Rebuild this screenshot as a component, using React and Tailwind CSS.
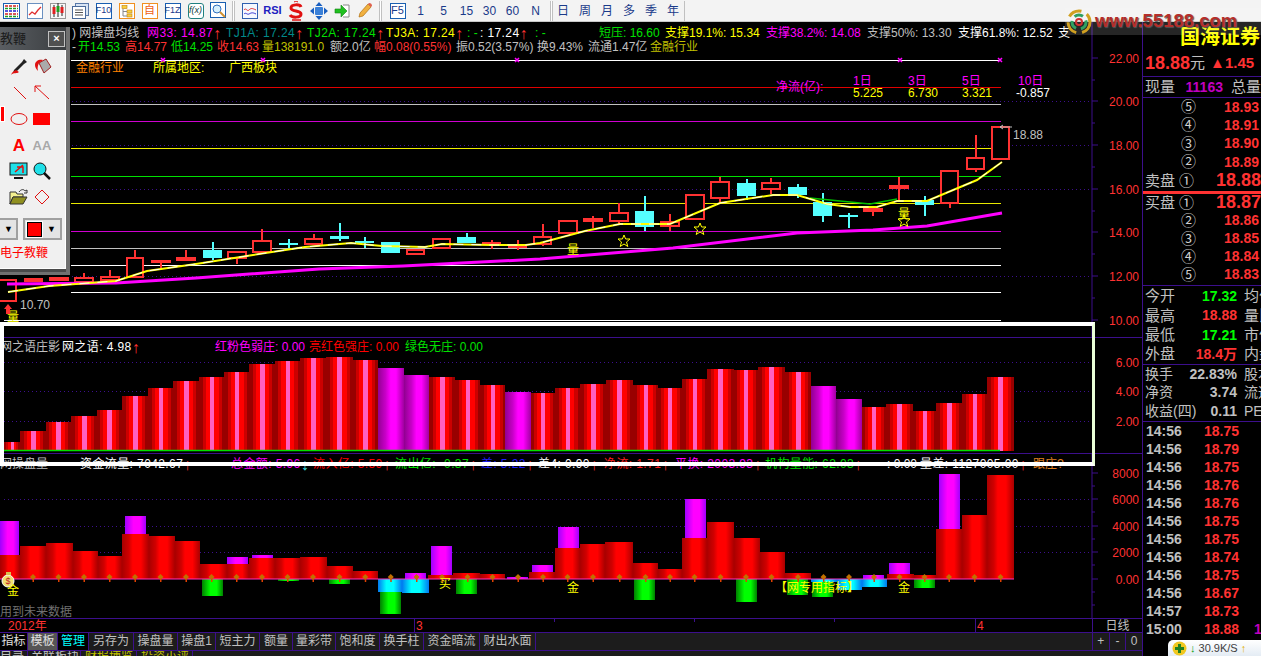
import React from "react";

const PURPLE = "#3c0f8c";
const RED = "#ff3232";

// hollow / filled / cyan candles: [x0, x1, top, bottom, wickTop, wickBottom, type]
const candles = [
  [-4, 17, 279, 302, 279, 302, "h"], [24, 43, 278, 282, 278, 282, "h"], [49, 69, 277, 281, 277, 281, "h"],
  [74, 94, 277, 283, 273, 283, "h"], [100, 120, 276, 281, 270, 281, "h"], [126, 144, 257, 278, 250, 278, "h"],
  [151, 171, 260, 263, 260, 268, "f"], [176, 196, 257, 261, 250, 261, "f"], [203, 222, 250, 258, 242, 260, "c"],
  [227, 247, 251, 259, 251, 264, "h"], [252, 272, 240, 253, 229, 253, "h"], [279, 298, 243, 245, 239, 248, "c"],
  [304, 323, 238, 245, 234, 245, "h"], [330, 349, 236, 239, 223, 241, "c"], [355, 374, 241, 243, 237, 248, "c"],
  [381, 400, 242, 253, 242, 253, "c"], [406, 425, 249, 255, 249, 255, "h"], [432, 451, 238, 249, 238, 249, "h"],
  [457, 476, 237, 243, 233, 243, "c"], [482, 501, 242, 243, 240, 249, "f"], [508, 527, 246, 248, 240, 250, "f"],
  [533, 552, 236, 245, 224, 246, "h"], [558, 578, 220, 234, 220, 234, "h"], [583, 603, 218, 222, 216, 228, "f"],
  [609, 629, 212, 222, 203, 224, "h"], [635, 654, 211, 227, 196, 231, "c"], [660, 680, 221, 227, 214, 231, "h"],
  [685, 705, 194, 220, 194, 220, "h"], [710, 730, 181, 199, 177, 202, "h"], [737, 756, 183, 196, 179, 200, "c"],
  [761, 781, 182, 190, 178, 194, "h"], [788, 807, 187, 195, 184, 198, "c"], [813, 832, 202, 216, 193, 222, "c"],
  [839, 858, 215, 217, 213, 228, "c"], [863, 883, 208, 212, 208, 216, "f"], [889, 909, 185, 189, 177, 200, "h"],
  [915, 934, 200, 205, 196, 216, "c"], [940, 959, 170, 204, 170, 208, "h"], [966, 985, 157, 170, 135, 172, "h"],
  [991, 1010, 126, 160, 126, 160, "h"],
];

const yellowLine = "8,292 49,286 116,281 147,271 196,264 253,255 305,247 351,243 382,246 425,247 442,244 491,245 526,245 540,243 585,231 620,224 670,224 720,203 773,195 797,195 827,204 850,207 877,207 897,201 927,201 977,180 1002,162";
const magentaLine = "7,284 116,283 196,278 319,269 403,266 540,259 673,248 797,233 873,230 927,226 1002,213";

const levels = [
  [87, "#e00000"], [104, "#c0c0c0"], [121, "#d000d0"], [148, "#f0f000"], [176, "#00e000"],
  [203, "#e8e800"], [231, "#d000d0"], [248, "#c0c0c0"], [265, "#ffffff"], [292, "#ffffff"], [320, "#ffffff"],
];

// middle panel: [x0, x1, top, isPurple]
const midBars = [
  [4, 20, 442], [20, 46, 431], [46, 71, 422], [71, 97, 416], [97, 122, 410], [122, 148, 396], [148, 173, 388],
  [173, 199, 381], [199, 224, 377], [224, 249, 372], [249, 275, 364], [275, 300, 361], [300, 326, 358],
  [326, 353, 357], [353, 377.5, 360], [377.5, 404, 368, 1], [404, 429, 375, 1], [429, 455, 377], [455, 480, 380],
  [480, 505, 385], [505, 531, 392, 1], [531, 555, 393], [555, 580, 388], [580, 606, 384], [606, 633, 380],
  [633, 658, 385], [658, 682, 388], [682, 707, 379], [707, 734, 369], [734, 758, 370], [758, 785, 367],
  [785, 811, 372], [811, 836, 386, 1], [836, 862, 399, 1], [862, 886, 407], [886, 913, 404], [913, 936, 411],
  [936, 962, 403], [962, 987, 394], [987, 1014, 377],
];

// lower panel rows: [x0, x1, kind, top, bottom]
const lowBars = [
  [0, 20, "r", 555, 579], [0, 19, "m", 521, 555], [20, 46, "r", 546, 579], [46, 73, "r", 543, 579], [73, 98, "r", 551, 579],
  [98, 122, "r", 556, 579], [122, 149, "r", 534, 579], [125, 146, "m", 516, 534], [149, 175, "r", 536, 579],
  [175, 200, "r", 541, 579], [200, 227, "r", 564, 579], [202, 223, "g", 579, 596], [227, 249, "r", 564, 579],
  [227, 248, "m", 557, 564], [249, 275, "r", 558, 579], [252, 273, "m", 555, 558], [275, 300, "r", 558, 579],
  [278, 299, "g", 579, 581], [300, 327, "r", 557, 579], [327, 353, "r", 566, 579], [329, 350, "g", 579, 584],
  [353, 378, "r", 571, 579], [378, 402, "b", 579, 592], [380, 401, "g", 592, 614], [402, 429, "b", 579, 593],
  [405, 426, "m", 573, 579], [428, 453, "r", 575, 579], [431, 452, "m", 546, 575], [453, 480, "r", 573, 579],
  [456, 477, "g", 579, 594], [480, 505, "r", 574, 579], [507, 528, "m", 577, 579], [529, 555, "r", 572, 579],
  [532, 553, "m", 565, 572], [555, 580, "r", 548, 579], [558, 579, "m", 527, 548], [580, 605, "r", 544, 579],
  [605, 633, "r", 542, 579], [633, 658, "r", 563, 579], [634, 655, "g", 579, 600], [658, 682, "r", 569, 579],
  [682, 707, "r", 538, 579], [685, 706, "m", 499, 538], [707, 734, "r", 522, 579], [734, 760, "r", 538, 579],
  [736, 757, "g", 579, 602], [760, 785, "r", 552, 579], [785, 811, "r", 573, 579], [787, 808, "g", 579, 595],
  [811, 837, "b", 579, 582], [812, 833, "g", 582, 597], [837, 862, "b", 579, 590], [862, 887, "b", 579, 587],
  [863, 884, "m", 575, 579], [887, 914, "r", 574, 579], [889, 910, "m", 563, 574], [914, 936, "r", 575, 579],
  [914, 935, "g", 579, 588], [936, 962, "r", 529, 579], [939, 960, "m", 474, 529], [962, 987, "r", 515, 579],
  [987, 1014, "r", 475, 579],
];

const fills = { r: "url(#lowRed)", m: "url(#lowPurple)", g: "url(#lowGreen)", b: "url(#lowBlue)" };

const legendTop = [
  [72, 32, "#c0c0c0", ") 网操盘均线"],
  [147, 32, "#ff00ff", "网33: 14.87", 1],
  [226, 32, "#008a8a", "TJ1A: 17.24", 1],
  [307, 32, "#00e000", "TJ2A: 17.24", 1],
  [386, 32, "#ffff00", "TJ3A: 17.24", 1],
  [467, 32, "#00e000", ": -"],
  [480, 32, "#ffffff", ": 17.24", 1],
  [535, 32, "#00e000", ": -"],
  [599, 32, "#00e000", "短压: 16.60"],
  [665, 32, "#ffff00", "支撑19.1%: 15.34"],
  [766, 32, "#ff00ff", "支撑38.2%: 14.08"],
  [867, 32, "#c0c0c0", "支撑50%: 13.30"],
  [958, 32, "#ffffff", "支撑61.8%: 12.52"],
  [1058, 32, "#ffffff", "支"],
  [72, 46, "#c0c0c0", "-"],
  [78, 46, "#00e000", "开14.53"],
  [125, 46, RED, "高14.77"],
  [171, 46, "#00e000", "低14.25"],
  [217, 46, RED, "收14.63"],
  [262, 46, "#c0c000", "量138191.0"],
  [330, 46, "#c0c0c0", "额2.0亿"],
  [374, 46, RED, "幅0.08(0.55%)"],
  [456, 46, "#c0c0c0", "振0.52(3.57%)"],
  [537, 46, "#c0c0c0", "换9.43%"],
  [588, 46, "#c0c0c0", "流通1.47亿"],
  [650, 46, "#c0c000", "金融行业"],
  [76, 67, "#ff8000", "金融行业"],
  [153, 67, "#ffff00", "所属地区:"],
  [229, 67, "#ffff00", "广西板块"],
  [776, 86, "#ff00ff", "净流(亿):"],
  [853, 80, "#ff00ff", "1日"],
  [908, 80, "#ff00ff", "3日"],
  [962, 80, "#ff00ff", "5日"],
  [1018, 80, "#ff00ff", "10日"],
  [853, 92, "#ffff00", "5.225"],
  [908, 92, "#ffff00", "6.730"],
  [962, 92, "#ffff00", "3.321"],
  [1016, 92, "#ffffff", "-0.857"],
];

const legendMid = [
  [0, 346, "#c0c0c0", "网之语庄影"],
  [62, 346, "#ffffff", "网之语: 4.98", 1],
  [215, 346, "#ff00ff", "红粉色弱庄: 0.00"],
  [309, 346, "#ff0000", "亮红色强庄: 0.00"],
  [405, 346, "#00e000", "绿色无庄: 0.00"],
];

const legendLow = [
  [0, 463, "#c0c0c0", "网操盘量"],
  [80, 463, "#ffffff", "资金流量: 7042.67", 1],
  [231, 463, "#ff00ff", "总金额: 5.96", 2],
  [313, 463, "#ff0000", "流入亿: 5.59", 1],
  [395, 463, "#00e000", "流出亿: -0.37", 1],
  [481, 463, "#2020ff", "差: 5.22", 1],
  [538, 463, "#ffffff", "差4: 0.90", 1],
  [604, 463, "#ff2020", "净流: 1.71", 1],
  [675, 463, "#ff00ff", "平换: 2003.93", 1],
  [765, 463, "#00e000", "机构量能: 62.03", 1],
  [887, 463, "#ffffff", ": 0.00"],
  [920, 463, "#ffffff", "量差: 1127005.00", 1],
  [1033, 463, "#e08020", "跟庄?"],
];

const Legend = ({ items }) =>
  items.map(([x, y, fill, text, arrow], i) => (
    <text key={i} x={x} y={y + 1} fill={fill} fontSize="12" letterSpacing={arrow ? "0.4" : "0"} dominantBaseline="central">
      {text}
      {arrow === 1 ? <tspan fill={RED} fontSize="16">↑</tspan> : null}
      {arrow === 2 ? <tspan fill="#40e0e0" fontSize="16">↓</tspan> : null}
    </text>
  ));

const AxisLabels = ({ items }) =>
  items.map(([label, y]) => (
    <text key={label} x="1139" y={y + 1} fill={RED} fontSize="12" textAnchor="end" dominantBaseline="central">
      {label}
    </text>
  ));

const Dotted = ({ y, x1 = 4, x2 = 1092 }) => (
  <line x1={x1} x2={x2} y1={y} y2={y} stroke={PURPLE} strokeDasharray="1 3" shapeRendering="crispEdges" />
);

const Star = ({ x, y }) => (
  <polygon
    transform={`translate(${x} ${y})`}
    points="0,-6 1.6,-2 6,-2 2.5,1 3.8,5.5 0,3 -3.8,5.5 -2.5,1 -6,-2 -1.6,-2"
    fill="none"
    stroke="#ffff00"
  />
);

const Cross = ({ x }) => (
  <path d={`M${x - 2} 58l4 4M${x + 2} 58l-4 4`} stroke="#ff00ff" strokeWidth="1.5" />
);

function MainPanel() {
  const majors = [58, 101, 145, 189, 232, 276, 320];
  const minors = [80, 123, 167, 211, 254, 298];
  return (
    <section className="h-[315px]">
      <svg className="block h-full w-full" viewBox="0 22 1142 315">
        {[145, 189, 276].map((y) => <Dotted key={y} y={y} x1={72} />)}
        <Dotted y={101} x1={72} />
        <line x1="71" x2="1001" y1="60" y2="60" stroke="#fff" shapeRendering="crispEdges" />
        {[163, 263, 517, 900, 1000].map((x) => <Cross key={x} x={x} />)}
        {levels.map(([y, c]) => (
          <line key={y} x1={y === 320 ? 4 : 71} x2="1001" y1={y} y2={y} stroke={c} shapeRendering="crispEdges" />
        ))}
        {candles.map(([x0, x1, top, bot, wt, wb, type], i) => {
          const color = type === "c" ? "#55ffff" : "#ff3232";
          const mid = (x0 + x1) / 2;
          return (
            <g key={i} shapeRendering="crispEdges">
              <line x1={mid} x2={mid} y1={wt} y2={wb} stroke={color} strokeWidth="2" />
              {type === "h" ? (
                <rect x={x0 + 1} y={top + 1} width={x1 - x0 - 2} height={bot - top - 2} fill="#000" stroke={color} strokeWidth="2" />
              ) : (
                <rect x={x0} y={top} width={x1 - x0} height={Math.max(bot - top, 2)} fill={color} />
              )}
            </g>
          );
        })}
        <polyline points={magentaLine} fill="none" stroke="#ff00ff" strokeWidth="3" />
        <polyline points="810,198 840,201 870,204 897,199" fill="none" stroke="#00c000" strokeWidth="1.5" />
        <polyline points={yellowLine} fill="none" stroke="#ffff00" strokeWidth="2" />
        <polyline points={yellowLine} fill="none" stroke="#ffffff" strokeWidth="1" strokeDasharray="10 8" />
        <Star x={624} y={241} />
        <Star x={700} y={229} />
        <Star x={904} y={221} />
        <Legend
          items={[
            [567, 249, "#ffff00", "量"],
            [898, 213, "#ffff00", "量"],
            [7, 316, "#ffff00", "量"],
            [20, 304, "#c0c0c0", "10.70"],
            [1013, 134, "#c0c0c0", "18.88"],
            ...legendTop,
          ]}
        />
        <path d="M1000 127l3-2m-3 2l3 2m-3-2h12" stroke="#c0c0c0" fill="none" />
        <path d="M4 309l4-5 4 5h-2v5h-4v-5z" fill="#ff3232" />
        <line x1="1092" x2="1092" y1="22" y2="337" stroke={PURPLE} />
        {majors.map((y) => <line key={y} x1="1092" x2="1098" y1={y} y2={y} stroke={PURPLE} />)}
        {minors.map((y) => <line key={y} x1="1092" x2="1095" y1={y} y2={y} stroke={PURPLE} />)}
        <AxisLabels
          items={[["22.00", 58], ["20.00", 101], ["18.00", 145], ["16.00", 189], ["14.00", 232], ["12.00", 276], ["10.00", 320]]}
        />
      </svg>
    </section>
  );
}

function MidPanel() {
  return (
    <section className="h-[117px]">
      <svg className="block h-full w-full" viewBox="0 337 1142 117">
        <defs>
          <linearGradient id="midRed">
            <stop offset="0" stopColor="#990000" /><stop offset="0.14" stopColor="#990000" />
            <stop offset="0.14" stopColor="#cc0000" /><stop offset="0.26" stopColor="#cc0000" />
            <stop offset="0.26" stopColor="#ff0000" /><stop offset="0.42" stopColor="#ff0000" />
            <stop offset="0.42" stopColor="#ff60c0" /><stop offset="0.6" stopColor="#ff60c0" />
            <stop offset="0.6" stopColor="#ff0000" /><stop offset="0.78" stopColor="#ff0000" />
            <stop offset="0.78" stopColor="#cc0000" /><stop offset="0.9" stopColor="#cc0000" />
            <stop offset="0.9" stopColor="#990000" /><stop offset="1" stopColor="#990000" />
          </linearGradient>
          <linearGradient id="midPurple">
            <stop offset="0" stopColor="#900090" /><stop offset="0.3" stopColor="#c800c8" />
            <stop offset="0.5" stopColor="#ff00ff" /><stop offset="0.7" stopColor="#ff00ff" />
            <stop offset="1" stopColor="#a000a0" />
          </linearGradient>
        </defs>
        <line x1="0" x2="1142" y1="337" y2="337" stroke={PURPLE} strokeWidth="2" />
        {[362, 391, 421].map((y) => <Dotted key={y} y={y} />)}
        {midBars.map(([x0, x1, top, purple], i) => (
          <rect key={i} x={x0} y={top} width={x1 - x0} height={451 - top} fill={purple ? "url(#midPurple)" : "url(#midRed)"} shapeRendering="crispEdges" />
        ))}
        <line x1="4" x2="1000" y1="450.5" y2="450.5" stroke="#00e000" strokeWidth="1.5" />
        <line x1="0" x2="1142" y1="453.5" y2="453.5" stroke={PURPLE} />
        <Legend items={legendMid} />
        <AxisLabels items={[["6.00", 362], ["4.00", 391], ["2.00", 421]]} />
      </svg>
    </section>
  );
}

function LowPanel() {
  const majors = [473, 499, 526, 552, 579];
  const minors = [486, 512, 539, 565, 592, 605];
  const dots = [];
  for (let i = 0; i < 40; i++) dots.push(midBars[i][0] / 2 + midBars[i][1] / 2);
  return (
    <section className="h-[164px]">
      <svg className="block h-full w-full" viewBox="0 454 1142 164">
        <defs>
          <linearGradient id="lowRed">
            <stop offset="0" stopColor="#a80000" /><stop offset="0.25" stopColor="#d00000" />
            <stop offset="0.4" stopColor="#ff0000" /><stop offset="0.7" stopColor="#ff0000" />
            <stop offset="1" stopColor="#a80000" />
          </linearGradient>
          <linearGradient id="lowPurple">
            <stop offset="0" stopColor="#a000ff" /><stop offset="0.4" stopColor="#ff00ff" />
            <stop offset="0.7" stopColor="#ff00ff" /><stop offset="1" stopColor="#a000ff" />
          </linearGradient>
          <linearGradient id="lowGreen">
            <stop offset="0" stopColor="#008000" /><stop offset="0.4" stopColor="#00ff00" />
            <stop offset="0.7" stopColor="#00ff00" /><stop offset="1" stopColor="#008000" />
          </linearGradient>
          <linearGradient id="lowBlue">
            <stop offset="0" stopColor="#0078f0" /><stop offset="0.35" stopColor="#00ffff" />
            <stop offset="0.65" stopColor="#00ffff" /><stop offset="1" stopColor="#0078f0" />
          </linearGradient>
        </defs>
        {[499, 526, 552].map((y) => <Dotted key={y} y={y} />)}
        <Legend items={legendLow} />
        {lowBars.map(([x0, x1, kind, top, bot], i) => (
          <rect key={i} x={x0} y={top} width={x1 - x0} height={bot - top} fill={fills[kind]} shapeRendering="crispEdges" />
        ))}
        <line x1="0" x2="1014" y1="579" y2="579" stroke="#ff30c0" />
        {dots.slice(1).map((x) => (
          <g key={x}>
            <polygon points={`${x - 3},577 ${x},574 ${x + 3},577 ${x},580`} fill="#c07000" />
            <rect x={x - 0.5} y="579" width="1.5" height="3" fill="#e04000" />
          </g>
        ))}
        <circle cx="8" cy="581" r="6" fill="#f0e070" stroke="#fff" />
        <rect x="6" y="572" width="5" height="3" fill="#d8c050" />
        <text x="8" y="581" fill="#c02020" fontSize="9" textAnchor="middle" dominantBaseline="central">$</text>
        <Legend
          items={[
            [7, 590, "#ffff00", "金"],
            [439, 583, "#ffff00", "买"],
            [567, 587, "#ffff00", "金"],
            [898, 587, "#ffff00", "金"],
            [775, 587, "#ffff00", "【网专用指标】"],
            [0, 611, "#707070", "用到未来数据"],
          ]}
        />
        <line x1="1092" x2="1092" y1="454" y2="618" stroke={PURPLE} />
        {majors.map((y) => <line key={y} x1="1092" x2="1098" y1={y} y2={y} stroke={PURPLE} />)}
        {minors.map((y) => <line key={y} x1="1092" x2="1095" y1={y} y2={y} stroke={PURPLE} />)}
        <AxisLabels items={[["8000", 473], ["6000", 499], ["4000", 526], ["2000", 552], ["0.00", 579]]} />
      </svg>
    </section>
  );
}

const tabs = [
  ["指标", "w-[28px] bg-black text-[#e0e0e0]"],
  ["模板", "w-[30px] bg-[#555555] text-[#e0e0e0]"],
  ["管理", "w-[31px] bg-black text-[#00ffff]"],
  ["另存为", "w-[45px] text-[#c0c0c0]"],
  ["操盘量", "w-[44px] text-[#c0c0c0]"],
  ["操盘1", "w-[38px] text-[#c0c0c0]"],
  ["短主力", "w-[44px] text-[#c0c0c0]"],
  ["额量", "w-[33px] text-[#c0c0c0]"],
  ["量彩带", "w-[43px] text-[#c0c0c0]"],
  ["饱和度", "w-[44px] text-[#c0c0c0]"],
  ["换手柱", "w-[44px] text-[#c0c0c0]"],
  ["资金暗流", "w-[56px] text-[#c0c0c0]"],
  ["财出水面", "w-[56px] text-[#c0c0c0]"],
];

function BottomBars() {
  return (
    <>
      <div className="relative flex h-[15px] border-b border-t border-[#3c0f8c] text-[12px] leading-[14px] text-[#ff3232]">
        <div className="w-[414px] pl-[8px]">2012年</div>
        <div className="w-[561px] border-l border-[#3c0f8c] pl-[1px]">3</div>
        <div className="w-[117px] border-l border-[#3c0f8c] pl-[1px]">4</div>
        <div className="flex-1 border-l border-[#3c0f8c] text-center text-[#c0c0c0]">日线</div>
        <span className="absolute left-[554px] top-0 h-[3px] w-px bg-[#3c0f8c]" />
        <span className="absolute left-[694px] top-0 h-[3px] w-px bg-[#3c0f8c]" />
        <span className="absolute left-[834px] top-0 h-[3px] w-px bg-[#3c0f8c]" />
      </div>
      <div className="flex h-[18px] border-b border-[#3c0f8c] bg-[#1c1c1c] text-[12px] leading-[17px]">
        {tabs.map(([label, cls]) => (
          <div key={label} className={`shrink-0 border-r border-[#3c0f8c] text-center ${cls}`}>{label}</div>
        ))}
        <div className="flex-1" />
        <div className="flex w-[50px] border-l border-[#3c0f8c] text-center text-[#c0c0c0]">
          <span className="flex-1 border-r border-[#3c0f8c]">+</span>
          <span className="flex-1 border-r border-[#3c0f8c]">-</span>
          <span className="flex-1">0</span>
        </div>
      </div>
      <div className="flex h-[5px] overflow-hidden bg-[#1c1c1c] text-[12px] leading-[12px]">
        <span className="w-[28px] border-r border-[#3c0f8c] text-[#c0c0c0]">目录</span>
        <span className="w-[53px] border-r border-[#3c0f8c] pl-[3px] text-[#c0c0c0]">关联板块</span>
        <span className="w-[56px] border-r border-[#3c0f8c] pl-[4px] text-[#c0c000]">财报博览</span>
        <span className="w-[56px] border-r border-[#3c0f8c] pl-[4px] text-[#c0c000]">投资小评</span>
      </div>
    </>
  );
}

const Cell = ({ children, className = "" }) => <div className={`flex items-center ${className}`}>{children}</div>;

const sells = [["⑤", "18.93"], ["④", "18.91"], ["③", "18.90"], ["②", "18.89"]];
const buys = [["②", "18.86"], ["③", "18.85"], ["④", "18.84"], ["⑤", "18.83"]];
const stats = [
  ["今开", "17.32", "text-[#00ff00]", "均价"],
  ["最高", "18.88", "text-[#ff3232]", "量比"],
  ["最低", "17.21", "text-[#00ff00]", "市值"],
  ["外盘", "18.4万", "text-[#ff3232]", "内盘"],
];
const funds = [["换手", "22.83%", "股本"], ["净资", "3.74", "流通"], ["收益(四)", "0.11", "PE"]];
const trades = [
  ["14:56", "18.75"], ["14:56", "18.79"], ["14:56", "18.75"], ["14:56", "18.76"], ["14:56", "18.76"], ["14:56", "18.75"],
  ["14:56", "18.75"], ["14:56", "18.74"], ["14:56", "18.75"], ["14:56", "18.67"], ["14:57", "18.73"], ["15:00", "18.88"],
];

function BookRow({ label, num, price, big }) {
  return (
    <Cell className="h-[18.4px]">
      <span className="w-[38px] pl-[2px] text-[15px] text-[#c0c0c0]">{label}</span>
      <span className="w-[15px] text-center text-[15px] text-[#d0d0d0]">{num}</span>
      <span className={`font-bold text-[#ff3232] ${big ? "ml-[22px] text-[18px]" : "ml-[28px] text-[14px]"}`}>{price}</span>
    </Cell>
  );
}

function InfoPanel() {
  return (
    <aside className="w-[119px] overflow-hidden border-l border-[#3c0f8c] text-[#c0c0c0]">
      <div className="h-[28px] whitespace-nowrap pl-[37px] pt-[3px] text-[20px] font-bold leading-[24px] text-[#ffff00]">国海证券</div>
      <Cell className="h-[27px] border-b border-[#3c0f8c] whitespace-nowrap pl-[2px]">
        <span className="text-[18px] font-bold text-[#ff3232]">18.88</span>
        <span className="text-[15px]">元</span>
        <span className="ml-[5px] text-[15px] font-bold text-[#ff3232]">▲1.45</span>
      </Cell>
      <Cell className="h-[21px] border-b border-[#3c0f8c] whitespace-nowrap pl-[2px] text-[15px]">
        <span className="w-[52px]">现量</span>
        <span className="text-[14px] font-bold text-[#c000c0]">11163</span>
        <span className="ml-[8px]">总量</span>
      </Cell>
      {sells.map(([n, p]) => <BookRow key={n} num={n} price={p} />)}
      <BookRow label="卖盘" num="①" price="18.88" big />
      <div className="mt-[1px] h-[3px] bg-[#ff3232]" />
      <div className="mb-[1px] [&>div]:h-[18px]">
        <BookRow label="买盘" num="①" price="18.87" big />
        {buys.map(([n, p]) => <BookRow key={n} num={n} price={p} />)}
      </div>
      <div className="border-t border-[#3c0f8c] pt-[1px]">
        {stats.map(([l, v, c, r]) => (
          <Cell key={l} className="h-[19.25px] whitespace-nowrap pl-[2px] text-[15px]">
            <span className="w-[32px] shrink-0">{l}</span>
            <span className={`w-[60px] shrink-0 text-right text-[14px] font-bold ${c}`}>{v}</span>
            <span className="ml-[7px]">{r}</span>
          </Cell>
        ))}
      </div>
      <div className="border-t border-[#3c0f8c]">
        {funds.map(([l, v, r]) => (
          <Cell key={l} className="h-[18.7px] whitespace-nowrap pl-[2px] text-[15px]">
            <span className="w-[42px] shrink-0 text-[14px]">{l}</span>
            <span className="w-[50px] shrink-0 text-right text-[14px] font-bold">{v}</span>
            <span className="ml-[7px] text-[14px]">{r}</span>
          </Cell>
        ))}
      </div>
      <div className="border-t border-[#3c0f8c]">
        {trades.map(([t, p], i) => (
          <Cell key={i} className="h-[18px] whitespace-nowrap pl-[3px] text-[14px] font-bold">
            <span className="w-[58px] shrink-0">{t}</span>
            <span className="w-[50px] shrink-0 text-[#ff3232]">{p}</span>
            {i === 11 ? <span className="text-[#c000c0]">1</span> : null}
          </Cell>
        ))}
      </div>
    </aside>
  );
}

const Tile = ({ children, className = "" }) => (
  <span className={`flex h-[22px] w-[23px] shrink-0 items-center justify-center ${className}`}>{children}</span>
);

const Box = ({ children, color = "#1a5fb0", className = "" }) => (
  <span className={`flex h-[16px] w-[16px] items-center justify-center border bg-white text-[9px] leading-none ${className}`} style={{ borderColor: color }}>
    {children}
  </span>
);

function Toolbar() {
  return (
    <header className="flex h-[22px] items-center border-b border-[#c8c8c8] bg-[#f3f3f3] text-[#1a3a8a]">
      <Tile>
        <svg width="17" height="16" viewBox="0 0 17 16"><rect x=".5" y=".5" width="16" height="15" fill="#fff" stroke="#1a5fb0" />
          <path d="M2 3h13M2 11h13" stroke="#d02020" strokeWidth="1.6" strokeDasharray="3 1" /><path d="M2 5.5h13M2 13.5h13" stroke="#20a020" strokeWidth="1.6" strokeDasharray="3 1" /><path d="M2 8h13" stroke="#2020d0" strokeWidth="1.6" strokeDasharray="3 1" /></svg>
      </Tile>
      <Tile>
        <svg width="16" height="16" viewBox="0 0 16 16"><rect x=".5" y=".5" width="15" height="15" fill="#fff" stroke="#6a90c0" /><path d="M2 12l3-3 3 2 3-4 3-3" fill="none" stroke="#e03030" strokeWidth="1.3" /></svg>
      </Tile>
      <Tile>
        <svg width="16" height="18" viewBox="0 0 16 18"><rect x=".5" y="1.5" width="15" height="15" fill="#f8f8f8" stroke="#999" /><path d="M4 3v12M8 1v14M12 3v11" stroke="#222" /><rect x="2.5" y="5" width="3" height="7" fill="#e02020" /><rect x="6.500" y="4" width="3" height="6" fill="#20a020" /><rect x="10.500" y="5" width="3" height="6" fill="#e02020" /></svg>
      </Tile>
      <Tile>
        <svg width="17" height="16" viewBox="0 0 17 16"><rect x="3.500" y=".5" width="13" height="12" fill="#d8e4f4" stroke="#5878a8" /><rect x=".5" y="3.500" width="13" height="12" fill="#fff" stroke="#4a6a9a" /><path d="M3 7h8M3 9.500h8M3 12h8" stroke="#555" /></svg>
      </Tile>
      <Tile><Box>F10</Box></Tile>
      <Tile>
        <svg width="16" height="16" viewBox="0 0 16 16"><rect x=".5" y=".5" width="15" height="15" fill="#fff" stroke="#f09020" /><rect x="3" y="2.500" width="5" height="3" fill="#f8d040" stroke="#c08010" strokeWidth=".6" /><rect x="8" y="7" width="5" height="3" fill="#f8d040" stroke="#c08010" strokeWidth=".6" /><rect x="8" y="11" width="5" height="3" fill="#f8d040" stroke="#c08010" strokeWidth=".6" /><path d="M4 6v7h4M4 8.500h4" fill="none" stroke="#888" /></svg>
      </Tile>
      <Tile><Box color="#f09020" className="text-[11px] text-[#f06010]">自</Box></Tile>
      <Tile><Box>F1Z</Box></Tile>
      <Tile><Box color="#208080" className="rounded-[3px] italic text-[#104040]">f(x)</Box></Tile>
      <Tile>
        <svg width="17" height="17" viewBox="0 0 17 17"><rect x=".5" y=".5" width="15" height="15" fill="#fff" stroke="#1a5fb0" /><circle cx="7" cy="7" r="4" fill="#d8f0fc" stroke="#3070c0" /><path d="M10 10l5 5" stroke="#d09030" strokeWidth="2" /></svg>
      </Tile>
      <span className="mx-[2px] h-[20px] w-[3px] shrink-0 border-x border-x-[#c0c0c0] bg-white" />
      <Tile className="ml-[1px]">
        <svg width="16" height="16" viewBox="0 0 16 16"><rect x=".5" y=".5" width="15" height="15" fill="#f4f8ff" stroke="#3060b0" /><path d="M2 7c2-3 3 2 5 0s3-2 7 0" fill="none" stroke="#e03030" /><path d="M2 11c2-2 3 1 5 0s3-2 7 0" fill="none" stroke="#3030d0" /></svg>
      </Tile>
      <Tile className="text-[11px] font-bold text-[#2020c0]">RSI</Tile>
      <Tile>
        <svg width="16" height="20" viewBox="0 0 16 20"><path d="M13 6c-1-3-10-3-10 1s10 2 10 6-9 4-11 1" fill="none" stroke="#e01010" strokeWidth="3" /><path d="M4 19h9" stroke="#e01010" strokeWidth="1.5" /><path d="M6 1l2-1 2 1" stroke="#e01010" fill="none" /></svg>
      </Tile>
      <Tile>
        <svg width="18" height="18" viewBox="0 0 18 18" fill="#1a5fc0"><path d="M9 0l3.500 4h-7zM9 18l-3.500-4h7zM0 9l4-3.500v7zM18 9l-4 3.500v-7z" /><rect x="5" y="5" width="8" height="8" rx="1" fill="#3a80d8" /></svg>
      </Tile>
      <Tile>
        <svg width="16" height="16" viewBox="0 0 16 16"><path d="M9 2h6v12H9" fill="#fff" stroke="#888" /><path d="M1 6h6V2l6 6-6 6v-4H1z" fill="#20c020" stroke="#108010" strokeWidth=".6" /></svg>
      </Tile>
      <Tile>
        <svg width="16" height="17" viewBox="0 0 16 17"><path d="M11 2l3 3-8 9-4 1 1-4z" fill="#f0b040" stroke="#b07010" strokeWidth=".7" /><path d="M11 2l3 3 1-1c0-2-1-3-3-3z" fill="#e06050" /></svg>
      </Tile>
      <span className="mx-[3px] h-[20px] w-[3px] shrink-0 border-x border-x-[#c0c0c0] bg-white" />
      <Tile className="ml-[1px]"><Box className="text-[11px]">F5</Box></Tile>
      {["1", "5", "15", "30", "60", "N"].map((t) => (
        <Tile key={t} className="text-[12px]">{t}</Tile>
      ))}
      <span className="mx-[3px] h-[20px] w-[3px] shrink-0 border-x border-x-[#c0c0c0] bg-white" />
      <div className="flex w-[129px] justify-between border-r border-[#c0c0c0] pl-[1px] pr-[5px] text-[12px] leading-[20px]">
        <span>日</span><span>周</span><span>月</span><span>多</span><span>季</span><span>年</span>
      </div>
    </header>
  );
}

const PaletteRow = ({ children }) => <div className="flex h-[26px] items-center justify-between pl-[9px] pr-[13px]">{children}</div>;

function Palette() {
  return (
    <div className="absolute left-0 top-[5px] h-[248px] w-[70px] overflow-hidden border-b-[3px] border-r-[4px] border-[#707070] bg-[#4a4a4a]">
      <div className="flex h-[23px] items-center justify-between bg-gradient-to-r from-[#5a5e62] to-[#3a3d40] pr-[1px] text-[13px] leading-none text-[#1a1a1a]">
        <span className="whitespace-nowrap">教鞭</span>
        <span className="flex h-[16px] w-[17px] items-center justify-center border border-[#c0c0c0] bg-[#505050] text-[11px] font-bold text-white">×</span>
      </div>
      <div className="h-[219px] border-b border-r border-white bg-[#f0f0f0] pt-[4px]">
        <PaletteRow>
          <svg width="20" height="20" viewBox="0 0 20 20"><path d="M15 2l3 3-3 2-8 8-3 1 1-3 8-8z" fill="#222" /><path d="M2 18c3-3 6-1 8-3l-3-2c-2 1-4 2-5 5z" fill="#e01010" /></svg>
          <svg width="20" height="20" viewBox="0 0 20 20"><path d="M7 6l7-4 5 8-7 6z" fill="#aaa" stroke="#a02020" /><path d="M3 8c0-4 4-6 8-5L7 6c-1 2-2 5-1 8-2-2-3-4-3-6z" fill="#e01010" /></svg>
        </PaletteRow>
        <PaletteRow>
          <svg width="20" height="20" viewBox="0 0 20 20"><path d="M5 4l12 12" stroke="#e01010" /></svg>
          <svg width="20" height="20" viewBox="0 0 20 20"><path d="M3 3l14 13M3 3v6M3 3h6" stroke="#e01010" fill="none" /></svg>
        </PaletteRow>
        <PaletteRow>
          <svg width="20" height="16" viewBox="0 0 20 16"><ellipse cx="10" cy="8" rx="8" ry="5.500" fill="none" stroke="#e01010" /></svg>
          <span className="mr-[2px] h-[12px] w-[17px] bg-[#ff0000]" />
        </PaletteRow>
        <PaletteRow>
          <span className="w-[20px] text-center text-[17px] font-bold leading-none text-[#ff0000]">A</span>
          <span className="w-[20px] whitespace-nowrap text-center text-[13px] font-bold leading-none text-[#a8a8a8]">AA</span>
        </PaletteRow>
        <PaletteRow>
          <svg width="20" height="18" viewBox="0 0 20 18"><rect x="1" y="1" width="17" height="12" fill="#20e0e8" stroke="#111" /><path d="M6 10l8-7M8 5h6v6" stroke="#e01010" fill="none" strokeWidth="1.5" /><path d="M5 15h9v2H5z" fill="#111" /></svg>
          <svg width="20" height="20" viewBox="0 0 20 20"><circle cx="8" cy="8" r="6" fill="#20e0e8" stroke="#111" /><path d="M12 12l6 6" stroke="#111" strokeWidth="2.500" /></svg>
        </PaletteRow>
        <PaletteRow>
          <svg width="20" height="18" viewBox="0 0 20 18"><path d="M1 4h6l1 2h6v3H4L1 16z" fill="#f4f090" stroke="#333" /><path d="M4 9h14l-4 7H1z" fill="#909020" stroke="#333" /><path d="M10 4c2-3 5-3 6-1l2-1v3h-3" fill="none" stroke="#333" /></svg>
          <svg width="20" height="20" viewBox="0 0 20 20"><path d="M10 3l7 7-7 7-7-7z" fill="none" stroke="#e01010" /></svg>
        </PaletteRow>
        <div className="mt-[8px] flex h-[22px] items-center justify-between pr-[3px]">
          <span className="flex h-[22px] w-[18px] items-center justify-end border-y-2 border-r-2 border-[#a0a0a0] bg-[#e4e4e4] pr-[3px] text-[9px] leading-none text-black">▼</span>
          <span className="flex h-[22px] w-[39px] items-center border-2 border-[#a0a0a0] bg-[#e4e4e4]">
            <span className="ml-[2px] h-[15px] w-[15px] border border-black bg-[#ff0000] outline outline-1 outline-white" />
            <span className="ml-[5px] text-[9px] leading-none text-black">▼</span>
          </span>
        </div>
        <div className="mt-[5px] whitespace-nowrap text-[12px] leading-[16px] text-[#ff0000]">电子教鞭</div>
      </div>
      <span className="absolute left-0 top-[79px] h-[16px] w-[5px] border border-white bg-[#ff0000]" />
    </div>
  );
}

function Watermark() {
  return (
    <div className="absolute left-[1065px] top-[8px] flex h-[27px] w-[196px] items-center bg-white/15">
      <svg width="28" height="27" viewBox="0 0 28 27" className="shrink-0">
        <circle cx="14" cy="14" r="11" fill="none" stroke="#d0a020" strokeWidth="3" strokeDasharray="14 6" />
        <circle cx="14" cy="14" r="7" fill="none" stroke="#30a060" strokeWidth="3" strokeDasharray="9 5" />
        <circle cx="14" cy="14" r="3" fill="none" stroke="#d03030" strokeWidth="2" />
      </svg>
      <span className="ml-[2px] whitespace-nowrap text-[18.5px] font-bold leading-none text-[#b52e2a] [text-shadow:1px_1px_1px_#555]">www.55188.com</span>
    </div>
  );
}

function TrayPopup() {
  return (
    <div className="absolute bottom-0 right-0 flex h-[16px] w-[93px] items-center gap-[3px] overflow-hidden rounded-tl-[5px] bg-gradient-to-b from-white to-[#e4ecf4] pl-[4px] text-[11px] leading-none text-[#404040]">
      <svg width="15" height="15" viewBox="0 0 15 15" className="shrink-0"><circle cx="7.500" cy="7.500" r="7" fill="#f0c820" /><path d="M7.500 3v9M3 7.500h9" stroke="#208020" strokeWidth="3" /></svg>
      <span className="whitespace-nowrap"><span className="font-bold text-[#10a010]">↓</span> 30.9K/S <span className="text-[#e0b000]">↑</span></span>
    </div>
  );
}

export default function App() {
  return (
    <div className="relative h-[656px] w-[1261px] overflow-hidden bg-black [font-family:'Liberation_Sans','Noto_Sans_CJK_SC',sans-serif]">
      <Toolbar />
      <div className="flex h-[634px]">
        <div className="relative w-[1142px] shrink-0">
          <MainPanel />
          <MidPanel />
          <LowPanel />
          <BottomBars />
          <div className="absolute left-0 top-[300px] h-[144px] w-[1095px] border-[4px] border-r-[3px] border-white border-r-[#eaffd8]" />
          <Palette />
        </div>
        <InfoPanel />
      </div>
      <Watermark />
      <TrayPopup />
    </div>
  );
}
